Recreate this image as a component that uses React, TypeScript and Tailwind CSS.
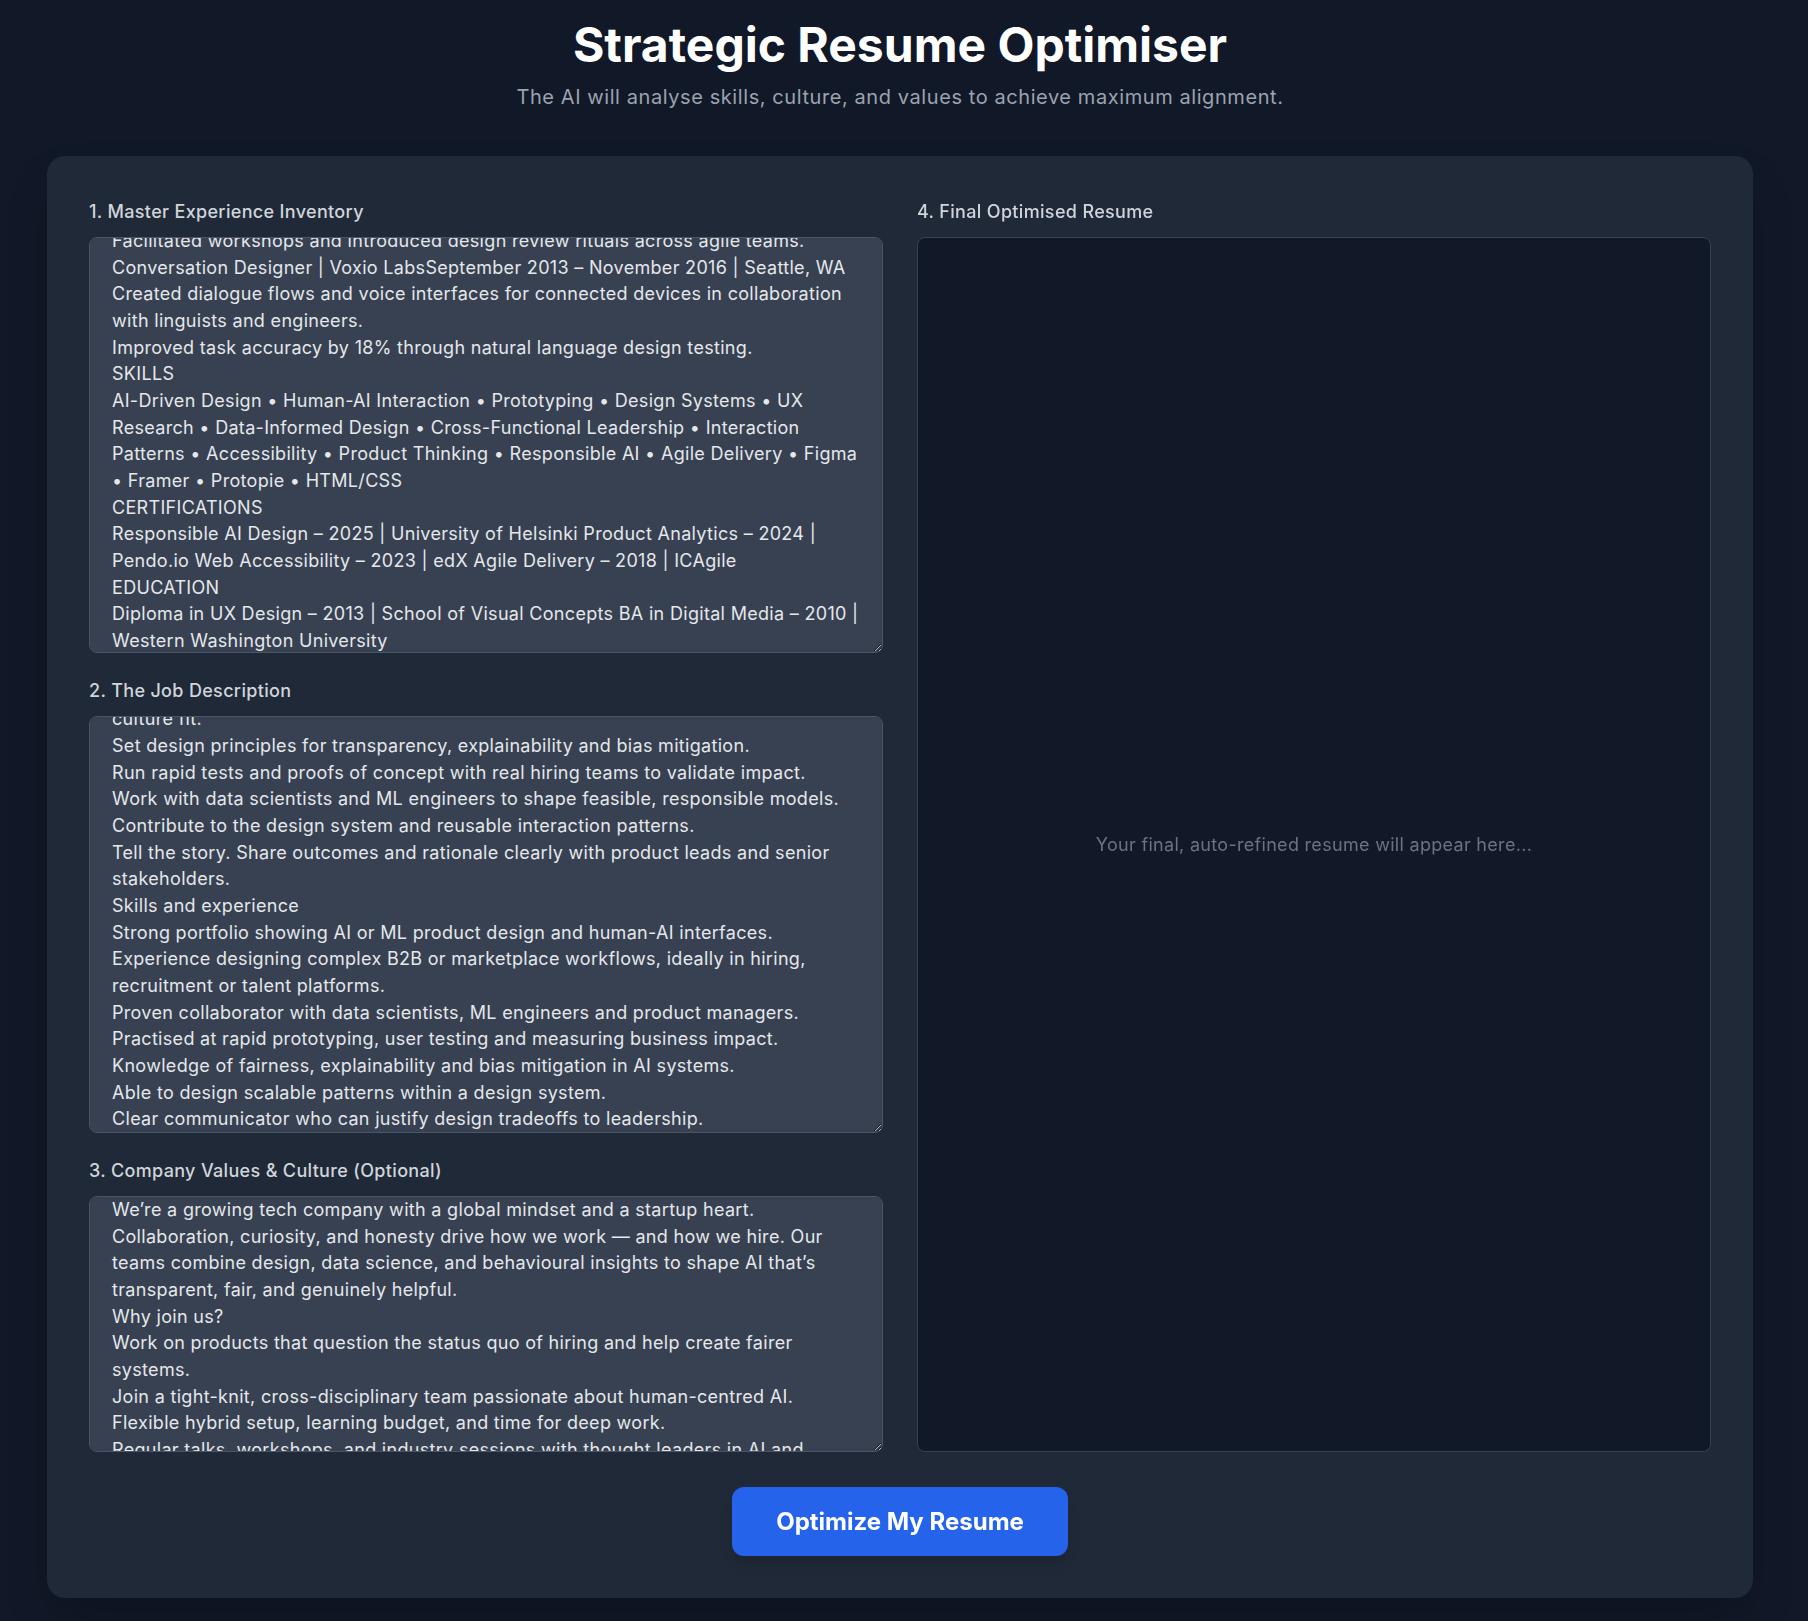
import React, { useEffect, useRef } from 'react';

const inventory = `ALEX MORGAN
Senior Product Designer | AI & Human-Centred Systems
Seattle, WA | alex.morgan@email.com | linkedin.com/in/alexmorgan
EXPERIENCE
Senior Product Designer | Brightpath AIJanuary 2021 – Present | Remote
Led end-to-end design of AI-assisted workflows for enterprise recruiting
teams.
Product Designer | Northwind HealthDecember 2016 – December 2020 | Seattle, WA
Designed patient-facing tools used by over 200,000 people each month.
Facilitated workshops and introduced design review rituals across agile teams.
Conversation Designer | Voxio LabsSeptember 2013 – November 2016 | Seattle, WA
Created dialogue flows and voice interfaces for connected devices in collaboration
with linguists and engineers.
Improved task accuracy by 18% through natural language design testing.
SKILLS
AI-Driven Design • Human-AI Interaction • Prototyping • Design Systems • UX
Research • Data-Informed Design • Cross-Functional Leadership • Interaction
Patterns • Accessibility • Product Thinking • Responsible AI • Agile Delivery • Figma
• Framer • Protopie • HTML/CSS
CERTIFICATIONS
Responsible AI Design – 2025 | University of Helsinki Product Analytics – 2024 |
Pendo.io Web Accessibility – 2023 | edX Agile Delivery – 2018 | ICAgile
EDUCATION
Diploma in UX Design – 2013 | School of Visual Concepts BA in Digital Media – 2010 |
Western Washington University`;

const jobDescription = `Senior Product Designer – AI Hiring Platform
About the role
We are looking for a designer to shape how people and AI work together.
What you'll do
Design intuitive experiences that help recruiters assess skills, potential and
culture fit.
Set design principles for transparency, explainability and bias mitigation.
Run rapid tests and proofs of concept with real hiring teams to validate impact.
Work with data scientists and ML engineers to shape feasible, responsible models.
Contribute to the design system and reusable interaction patterns.
Tell the story. Share outcomes and rationale clearly with product leads and senior
stakeholders.
Skills and experience
Strong portfolio showing AI or ML product design and human-AI interfaces.
Experience designing complex B2B or marketplace workflows, ideally in hiring,
recruitment or talent platforms.
Proven collaborator with data scientists, ML engineers and product managers.
Practised at rapid prototyping, user testing and measuring business impact.
Knowledge of fairness, explainability and bias mitigation in AI systems.
Able to design scalable patterns within a design system.
Clear communicator who can justify design tradeoffs to leadership.`;

const companyValues = `We’re a growing tech company with a global mindset and a startup heart.
Collaboration, curiosity, and honesty drive how we work — and how we hire. Our
teams combine design, data science, and behavioural insights to shape AI that’s
transparent, fair, and genuinely helpful.
Why join us?
Work on products that question the status quo of hiring and help create fairer
systems.
Join a tight-knit, cross-disciplinary team passionate about human-centred AI.
Flexible hybrid setup, learning budget, and time for deep work.
Regular talks, workshops, and industry sessions with thought leaders in AI and
design.
Inclusive benefits and a culture that values wellbeing.`;

const Field = ({
  label,
  value,
  height,
  scrollOffset,
}: {
  label: string;
  value: string;
  height: string;
  scrollOffset: number | null;
}) => {
  const ref = useRef<HTMLTextAreaElement>(null);

  useEffect(() => {
    const el = ref.current;
    if (el && scrollOffset !== null) {
      el.scrollTop = el.scrollHeight - el.clientHeight - scrollOffset;
    }
  }, [scrollOffset]);

  return (
    <div>
      <label className="block text-[18px] leading-[28px] font-medium tracking-[0.33px] text-[#d1d5db] mb-[11px]">
        {label}
      </label>
      <textarea
        ref={ref}
        wrap="off"
        defaultValue={value}
        className={`block w-full ${height} bg-[#374151] border border-[#4b5563] rounded-lg px-[22px] py-0 text-[18px] leading-[26.67px] tracking-[0.31px] text-[#e5e7eb] outline-none [scrollbar-width:none]`}
      />
    </div>
  );
};

const App = () => {
  const fields = [
    { label: '1. Master Experience Inventory', value: inventory, height: 'h-[416px]', scrollOffset: 3 },
    { label: '2. The Job Description', value: jobDescription, height: 'h-[417px]', scrollOffset: 1 },
    { label: '3. Company Values & Culture (Optional)', value: companyValues, height: 'h-[256px]', scrollOffset: null },
  ];

  return (
    <div className="min-h-screen bg-[#111827] font-['Inter',sans-serif] pl-[47px] pr-[55px] pt-[17px] pb-[23px]">
      <header className="text-center">
        <h1 className="text-[48px] leading-[56px] font-bold text-white">Strategic Resume Optimiser</h1>
        <p className="mt-[10px] text-[20px] leading-[28px] tracking-[0.58px] text-[#9ca3af]">
          The AI will analyse skills, culture, and values to achieve maximum alignment.
        </p>
      </header>

      <main className="mt-[45px] bg-[#1f2937] rounded-[18px] p-[42px] shadow-2xl">
        <div className="grid grid-cols-2 gap-[34px]">
          <div className="flex flex-col gap-6">
            {fields.map((field) => (
              <Field key={field.label} {...field} />
            ))}
          </div>

          <div className="flex flex-col">
            <label className="block text-[18px] leading-[28px] font-medium tracking-[0.33px] text-[#d1d5db] mb-[11px]">
              4. Final Optimised Resume
            </label>
            <div className="flex-1 flex items-center justify-center bg-[#111827] border border-[#374151] rounded-lg">
              <p className="text-[18px] tracking-[0.3px] text-[#6b7280]">Your final, auto-refined resume will appear here...</p>
            </div>
          </div>
        </div>

        <div className="mt-[35px] flex justify-center">
          <button className="h-[69px] px-[44px] bg-[#2563eb] hover:bg-[#1d4ed8] text-white text-[24px] font-bold rounded-xl shadow-lg">
            Optimize My Resume
          </button>
        </div>
      </main>
    </div>
  );
};

export default App;
